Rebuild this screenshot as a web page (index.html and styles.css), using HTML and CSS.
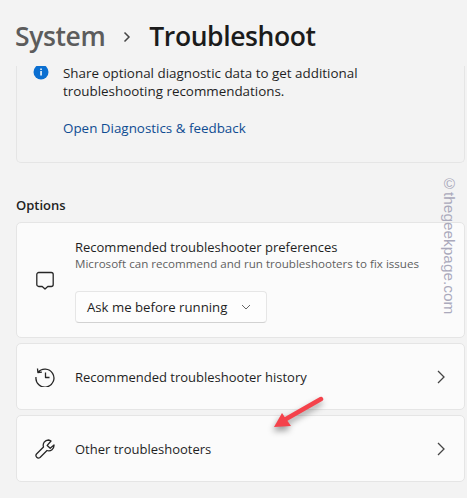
FILE: index.html
```html
<!DOCTYPE html>
<html lang="en">
<head>
  <meta charset="UTF-8" />
  <title>Troubleshoot</title>
  <link rel="stylesheet" href="styles.css">
</head>
<body>
  <div class="page">
    <div class="crumbs">
      <span class="crumb-parent">System</span>
      <svg class="crumb-sep" width="10" height="12" viewBox="0 0 10 12"><path d="M2.500 1.500 7 6l-4.500 4.500" /></svg>
      <span class="crumb-current">Troubleshoot</span>
    </div>

    <div class="scroller">
      <!-- card is scrolled under the header, so its top edge and the icon top are cut -->
      <div class="info-card">
        <svg class="info-icon" width="16" height="14" viewBox="0 2 16 14">
          <circle cx="8" cy="8" r="7.500" fill="#0b6fd1" />
          <rect x="7.300" y="7" width="1.500" height="4.500" fill="#fff" />
          <rect x="7.300" y="4.500" width="1.500" height="1.500" fill="#fff" />
        </svg>
        <div class="info-text">
          <p>Share optional diagnostic data to get additional troubleshooting recommendations.</p>
          <a href="#">Open Diagnostics &amp; feedback</a>
        </div>
      </div>

      <h2>Options</h2>

      <div class="card card-prefs">
        <svg class="icon" width="20" height="20" viewBox="0 0 20 20"><path d="M3.800 2.500h12.400a2 2 0 0 1 2 2v10a2 2 0 0 1-2 2h-3.400L10 19l-2.800-2.500H3.800a2 2 0 0 1-2-2v-10a2 2 0 0 1 2-2z" /></svg>
        <div class="prefs-body">
          <div class="card-title">Recommended troubleshooter preferences</div>
          <div class="card-sub">Microsoft can recommend and run troubleshooters to fix issues</div>
          <button class="select">
            <span>Ask me before running</span>
            <svg width="10" height="6" viewBox="0 0 10 6"><path d="M1 1l4 4 4-4" /></svg>
          </button>
        </div>
      </div>

      <div class="card card-row">
        <svg class="icon" width="20" height="20" viewBox="0 0 20 20"><path d="M2.900 5.500A9 9 0 1 1 1 10M2.500 1.500l.4 4 4-.4M10.500 5.500v5h4" /></svg>
        <div class="card-title">Recommended troubleshooter history</div>
        <svg class="chev" width="8" height="14" viewBox="0 0 8 14"><path d="M1 1l6 6-6 6" /></svg>
      </div>

      <div class="card card-row">
        <svg class="icon" width="20" height="20" viewBox="0 0 20 20"><path d="M13.500 1a5.300 5.300 0 0 0-5 7L1.500 15a2.500 2.500 0 0 0 3.500 3.500l7-7a5.300 5.300 0 0 0 7-5.500l-3.800 3.200-3-2.800L16 2a5.300 5.300 0 0 0-2.500-1z" /></svg>
        <div class="card-title">Other troubleshooters</div>
        <svg class="chev" width="8" height="14" viewBox="0 0 8 14"><path d="M1 1l6 6-6 6" /></svg>
      </div>
    </div>
  </div>

  <!-- annotation layered on the screenshot -->
  <svg class="arrow" width="70" height="50" viewBox="0 0 70 50">
    <path d="M55 12 20 32" stroke="#f4424b" stroke-width="4.500" stroke-linecap="round" />
    <path d="M8 40 16 26l9 13z" fill="#f4424b" />
  </svg>
  <div class="watermark">©thegeekpage.com</div>
</body>
</html>
```

FILE: styles.css
```css
:root {
  --bg: #f3f3f3;
  --card: #fbfbfb;
  --line: #e5e5e5;
  --text: #1f1f1f;
  --muted: #5f5f5f;
}

* {
  box-sizing: border-box;
  margin: 0;
  padding: 0;
  font-family: 'Open Sans', 'Noto Sans', sans-serif;
}

html, body {
  height: 100%;
  overflow: hidden;
}

body {
  background: var(--bg);
  color: var(--text);
  position: relative;
}

.page {
  height: 498px;
  display: flex;
  flex-direction: column;
}

.crumbs {
  height: 66px;
  flex: none;
  display: flex;
  align-items: center;
  padding: 6px 0 0 15px;
}

.crumb-parent {
  font-size: 26.500px;
  font-weight: 600;
  color: #5c5c5c;
  letter-spacing: -0.4px;
}

.crumb-sep {
  margin: 2px 17px 0 17px;
}

.crumb-sep path {
  fill: none;
  stroke: #444;
  stroke-width: 1.500;
}

.crumb-current {
  font-size: 26.500px;
  font-weight: 600;
  color: #1b1b1b;
  letter-spacing: -0.4px;
}

.scroller {
  flex: 1;
  padding: 0 2px 0 16px;
}

.info-card {
  height: 97px;
  margin-bottom: 33px;
  padding: 0 16px;
  display: flex;
  gap: 14px;
  border: 1px solid var(--line);
  border-top: none;
  border-radius: 0 0 5px 5px;
}

.info-icon {
  flex: none;
}

.info-text p {
  font-size: 13.400px;
  line-height: 18px;
  width: 310px;
  margin-top: -2px;
}

.info-text a {
  display: block;
  margin-top: 19px;
  font-size: 13.400px;
  line-height: 18px;
  color: #0f4c92;
  text-decoration: none;
}

h2 {
  font-size: 13px;
  font-weight: 600;
  line-height: 18px;
  margin-bottom: 8px;
}

.card {
  background: var(--card);
  border: 1px solid var(--line);
  border-radius: 5px;
  margin-bottom: 5px;
}

.card-prefs {
  height: 116px;
  display: flex;
  align-items: center;
  padding: 0 0 0 18px;
  gap: 20px;
}

.card-row {
  height: 67px;
  display: flex;
  align-items: center;
  padding: 0 19px 0 18px;
  gap: 20px;
}

.icon {
  flex: none;
}

.icon path {
  fill: none;
  stroke: #262626;
  stroke-width: 1.300;
  stroke-linejoin: round;
}

.prefs-body {
  align-self: flex-start;
  padding-top: 15px;
}

.card-title {
  font-size: 13px;
  line-height: 18px;
  flex: 1;
}

.card-sub {
  font-size: 11.600px;
  line-height: 16px;
  color: var(--muted);
  white-space: nowrap;
}

.select {
  display: flex;
  align-items: center;
  justify-content: space-between;
  width: 192px;
  height: 32px;
  margin-top: 19px;
  padding: 0 15px 0 11px;
  background: #fdfdfd;
  border: 1px solid #e6e6e6;
  border-bottom-color: #d2d2d2;
  border-radius: 4px;
  font-size: 13.200px;
  color: var(--text);
}

.select svg path {
  fill: none;
  stroke: #666;
  stroke-width: 1;
}

.chev path {
  fill: none;
  stroke: #444;
  stroke-width: 1.300;
}

.arrow {
  position: absolute;
  left: 266px;
  top: 387px;
  overflow: visible;
  filter: drop-shadow(-1px 4px 3px rgba(0, 0, 0, 0.4));
}

.watermark {
  position: absolute;
  left: 439px;
  top: 175px;
  writing-mode: vertical-rl;
  font-size: 15.400px;
  line-height: 20px;
  font-family: 'Liberation Sans', sans-serif;
  color: #aaa9bb;
  white-space: nowrap;
}
```
